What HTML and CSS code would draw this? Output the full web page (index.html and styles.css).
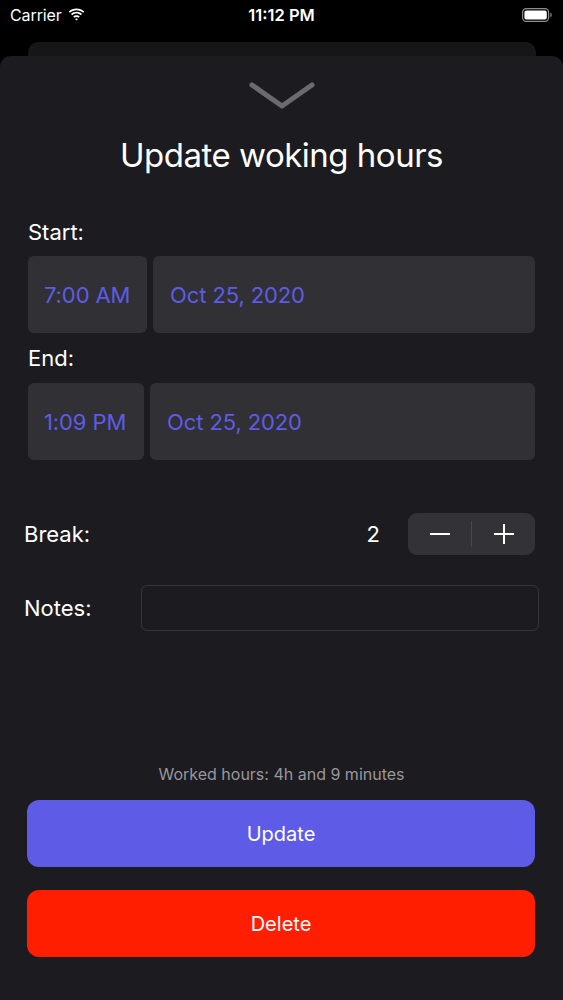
FILE: index.html
```html
<!DOCTYPE html>
<html lang="en">
<head>
<meta charset="utf-8">
<title>Update woking hours</title>
<link rel="stylesheet" href="styles.css">
</head>
<body>
<div class="screen">
  <div class="status">
    <div class="status-left">
      <span class="carrier">Carrier</span>
      <svg class="wifi" width="17" height="13" viewBox="0 0 16 13">
        <path d="M8 2.2c2.6 0 4.9 1 6.6 2.6l1.2-1.3C13.8 1.6 11 .4 8 .4S2.2 1.6.2 3.5l1.2 1.3C3.1 3.2 5.4 2.2 8 2.2z" fill="#fff"/>
        <path d="M8 5.6c1.7 0 3.2.6 4.3 1.7l1.2-1.3C12.1 4.6 10.1 3.8 8 3.8S3.9 4.6 2.5 6l1.2 1.3C4.8 6.2 6.3 5.6 8 5.6z" fill="#fff"/>
        <path d="M8 9c.8 0 1.5.3 2 .8l1.2-1.3C10.4 7.7 9.2 7.2 8 7.2s-2.4.5-3.2 1.3L6 9.8c.5-.5 1.2-.8 2-.8z" fill="#fff"/>
        <path d="M8 12.6l1.5-1.6c-.4-.4-.9-.6-1.5-.6s-1.1.2-1.5.6z" fill="#fff"/>
      </svg>
    </div>
    <div class="status-time">11:12 PM</div>
    <div class="status-right">
      <svg class="battery" width="30" height="14" viewBox="0 0 30 14">
        <rect x="0.6" y="0.6" width="26" height="12.8" rx="3.6" fill="none" stroke="#8e8e93" stroke-width="1.2"/>
        <rect x="2.4" y="2.4" width="22.4" height="9.2" rx="2" fill="#fff"/>
        <path d="M28.3 4.8c.9.3 1.4 1.1 1.4 2.2s-.5 1.9-1.4 2.2z" fill="#8e8e93"/>
      </svg>
    </div>
  </div>
  <div class="backcard"></div>
  <div class="sheet">
    <div class="grabber">
      <svg width="66" height="28" viewBox="0 0 66 28">
        <path d="M3 3L33 24L63 3" fill="none" stroke="#6b6b6f" stroke-width="5" stroke-linecap="round" stroke-linejoin="round"/>
      </svg>
    </div>
    <h1 class="title">Update woking hours</h1>

    <div class="section">
      <div class="label">Start:</div>
      <div class="picker-row">
        <div class="pill time start-time">7:00 AM</div>
        <div class="pill date">Oct 25, 2020</div>
      </div>
      <div class="label label-end">End:</div>
      <div class="picker-row">
        <div class="pill time end-time">1:09 PM</div>
        <div class="pill date">Oct 25, 2020</div>
      </div>
    </div>

    <div class="break-row">
      <span class="row-label">Break:</span>
      <span class="break-value">2</span>
      <div class="stepper">
        <div class="step">
          <svg width="20" height="20" viewBox="0 0 20 20"><path d="M0 10H20" stroke="#fff" stroke-width="2"/></svg>
        </div>
        <div class="step-divider"></div>
        <div class="step">
          <svg width="20" height="20" viewBox="0 0 20 20"><path d="M0 10H20M10 0V20" stroke="#fff" stroke-width="2"/></svg>
        </div>
      </div>
    </div>

    <div class="notes-row">
      <span class="row-label">Notes:</span>
      <div class="notes-field"></div>
    </div>

    <div class="footer">
      <div class="worked">Worked hours: 4h and 9 minutes</div>
      <div class="btn btn-update">Update</div>
      <div class="btn btn-delete">Delete</div>
    </div>
  </div>
</div>
</body>
</html>
```
FILE: styles.css
```css
* { box-sizing: border-box; }
html, body {
  margin: 0;
  padding: 0;
  background: #000;
}
body {
  font-family: Inter, "Noto Sans", Roboto, sans-serif;
  color: #fff;
}
.screen {
  width: 563px;
  height: 1000px;
  overflow: hidden;
  background: #000;
  display: flex;
  flex-direction: column;
}
.status {
  height: 42px;
  display: flex;
  align-items: flex-start;
  justify-content: space-between;
  padding: 4px 11px 0 10px;
  position: relative;
}
.status-left {
  display: flex;
  align-items: center;
  gap: 6px;
  height: 22px;
}
.carrier {
  font-size: 16px;
  letter-spacing: -0.1px;
}
.wifi { margin-top: -2px; }
.status-time {
  position: absolute;
  left: 0;
  right: 0;
  top: 4px;
  text-align: center;
  font-size: 16.5px;
  font-weight: 600;
  height: 22px;
  line-height: 22px;
}
.status-right {
  height: 22px;
  display: flex;
  align-items: center;
}
.battery { margin-top: -1px; }
.backcard {
  height: 16px;
  margin: 0 27px 0 28px;
  background: #161518;
  border-radius: 10px 10px 0 0;
  flex: none;
}
.sheet {
  flex: 1;
  margin-top: -2px;
  background: #1c1b1f;
  border-radius: 11px 11px 0 0;
  display: flex;
  flex-direction: column;
}
.grabber {
  display: flex;
  justify-content: center;
  padding-top: 26px;
  height: 54px;
  margin-left: 1px;
}
.title {
  margin: 25px 0 0;
  text-align: center;
  font-weight: 400;
  font-size: 33px;
  line-height: 40px;
  letter-spacing: -0.5px;
}
.section {
  padding: 0 28px 0 28px;
  margin-top: 44px;
}
.label {
  font-size: 22px;
  line-height: 26px;
  height: 26px;
  margin-bottom: 11px;
}
.label-end {
  margin-top: 12px;
  margin-bottom: 12px;
}
.picker-row {
  display: flex;
  gap: 6px;
  height: 77px;
}
.pill {
  background: #313034;
  border-radius: 6px;
  color: #5e5ce6;
  font-size: 22px;
  display: flex;
  align-items: center;
  letter-spacing: -0.1px;
}
.time {
  padding-left: 16px;
  flex: none;
}
.start-time { width: 119px; }
.end-time { width: 116px; }
.date {
  flex: 1;
  padding-left: 17px;
}
.break-row {
  display: flex;
  align-items: center;
  margin-top: 52px;
  padding: 0 28px 0 24px;
  height: 43px;
}
.row-label {
  font-size: 22px;
}
.break-value {
  margin-left: auto;
  font-size: 22px;
  margin-right: 28px;
}
.stepper {
  width: 127px;
  height: 42px;
  background: #333237;
  border-radius: 9px;
  display: flex;
  align-items: center;
}
.step {
  flex: 1;
  display: flex;
  justify-content: center;
  align-items: center;
}
.step-divider {
  width: 1px;
  height: 26px;
  background: #48474c;
}
.notes-row {
  display: flex;
  align-items: center;
  margin-top: 30px;
  padding: 0 24px 0 24px;
  height: 46px;
}
.notes-field {
  margin-left: auto;
  width: 398px;
  height: 46px;
  border: 1px solid #36353a;
  border-radius: 6px;
}
.footer {
  margin-top: auto;
  padding: 0 28px 43px 27px;
  display: flex;
  flex-direction: column;
}
.worked {
  text-align: center;
  font-size: 16px;
  color: #98979c;
  line-height: 20px;
  margin-bottom: 16px;
  margin-left: 1px;
}
.btn {
  height: 67px;
  border-radius: 12px;
  display: flex;
  align-items: center;
  justify-content: center;
  font-size: 20px;
}
.btn-update {
  background: #5e5ce6;
}
.btn-delete {
  background: #ff1f00;
  margin-top: 23px;
}
```
